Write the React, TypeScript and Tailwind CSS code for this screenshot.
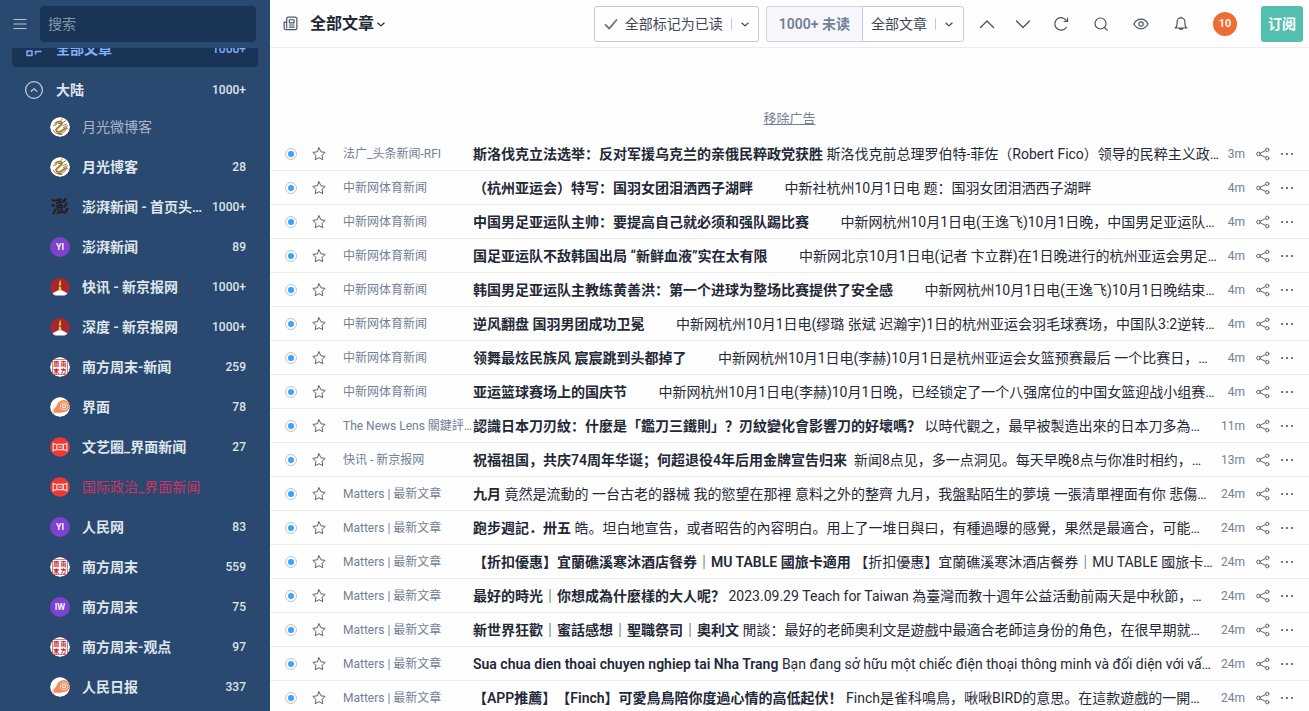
import React from 'react';
import clsx from 'clsx';

type Feed = {
  name: string;
  count?: string;
  icon: 'dragon' | 'paper' | 'yi' | 'iw' | 'beijing' | 'nanfang' | 'comet' | 'jiemian';
  state?: 'read' | 'error';
};

type Article = {
  source: string;
  title: string;
  excerpt: string;
  time: string;
};

const feeds: Feed[] = [
  { name: '月光微博客', icon: 'dragon', state: 'read' },
  { name: '月光博客', count: '28', icon: 'dragon' },
  { name: '澎湃新闻 - 首页头…', count: '1000+', icon: 'paper' },
  { name: '澎湃新闻', count: '89', icon: 'yi' },
  { name: '快讯 - 新京报网', count: '1000+', icon: 'beijing' },
  { name: '深度 - 新京报网', count: '1000+', icon: 'beijing' },
  { name: '南方周末-新闻', count: '259', icon: 'nanfang' },
  { name: '界面', count: '78', icon: 'comet' },
  { name: '文艺圈_界面新闻', count: '27', icon: 'jiemian' },
  { name: '国际政治_界面新闻', icon: 'jiemian', state: 'error' },
  { name: '人民网', count: '83', icon: 'yi' },
  { name: '南方周末', count: '559', icon: 'nanfang' },
  { name: '南方周末', count: '75', icon: 'iw' },
  { name: '南方周末-观点', count: '97', icon: 'nanfang' },
  { name: '人民日报', count: '337', icon: 'comet' },
];

const articles: Article[] = [
  {
    source: '法广_头条新闻-RFI',
    title: '斯洛伐克立法选举：反对军援乌克兰的亲俄民粹政党获胜',
    excerpt: '斯洛伐克前总理罗伯特-菲佐（Robert Fico）领导的民粹主义政…',
    time: '3m',
  },
  {
    source: '中新网体育新闻',
    title: '（杭州亚运会）特写：国羽女团泪洒西子湖畔',
    excerpt: '\u3000\u3000中新社杭州10月1日电 题：国羽女团泪洒西子湖畔',
    time: '4m',
  },
  {
    source: '中新网体育新闻',
    title: '中国男足亚运队主帅：要提高自己就必须和强队踢比赛',
    excerpt: '\u3000\u3000中新网杭州10月1日电(王逸飞)10月1日晚，中国男足亚运队…',
    time: '4m',
  },
  {
    source: '中新网体育新闻',
    title: '国足亚运队不敌韩国出局 “新鲜血液”实在太有限',
    excerpt: '\u3000\u3000中新网北京10月1日电(记者 卞立群)在1日晚进行的杭州亚运会男足…',
    time: '4m',
  },
  {
    source: '中新网体育新闻',
    title: '韩国男足亚运队主教练黄善洪：第一个进球为整场比赛提供了安全感',
    excerpt: '\u3000\u3000中新网杭州10月1日电(王逸飞)10月1日晚结束…',
    time: '4m',
  },
  {
    source: '中新网体育新闻',
    title: '逆风翻盘 国羽男团成功卫冕',
    excerpt: '\u3000\u3000中新网杭州10月1日电(缪璐 张斌 迟瀚宇)1日的杭州亚运会羽毛球赛场，中国队3:2逆转…',
    time: '4m',
  },
  {
    source: '中新网体育新闻',
    title: '领舞最炫民族风 宸宸跳到头都掉了',
    excerpt: '\u3000\u3000中新网杭州10月1日电(李赫)10月1日是杭州亚运会女篮预赛最后 一个比赛日，…',
    time: '4m',
  },
  {
    source: '中新网体育新闻',
    title: '亚运篮球赛场上的国庆节',
    excerpt: '\u3000\u3000中新网杭州10月1日电(李赫)10月1日晚，已经锁定了一个八强席位的中国女篮迎战小组赛…',
    time: '4m',
  },
  {
    source: 'The News Lens 關鍵評…',
    title: '認識日本刀刃紋：什麼是「鑑刀三鐵則」？刃紋變化會影響刀的好壞嗎？',
    excerpt: '以時代觀之，最早被製造出來的日本刀多為…',
    time: '11m',
  },
  {
    source: '快讯 - 新京报网',
    title: '祝福祖国，共庆74周年华诞；何超退役4年后用金牌宣告归来',
    excerpt: '\u00a0新闻8点见，多一点洞见。每天早晚8点与你准时相约，…',
    time: '13m',
  },
  {
    source: 'Matters | 最新文章',
    title: '九月',
    excerpt: '竟然是流動的 一台古老的器械 我的慾望在那裡 意料之外的整齊 九月，我盤點陌生的夢境 一張清單裡面有你 悲傷…',
    time: '24m',
  },
  {
    source: 'Matters | 最新文章',
    title: '跑步週記．卅五',
    excerpt: '皓。坦白地宣告，或者昭告的內容明白。用上了一堆日與曰，有種過曝的感覺，果然是最適合，可能…',
    time: '24m',
  },
  {
    source: 'Matters | 最新文章',
    title: '【折扣優惠】宜蘭礁溪寒沐酒店餐券｜MU TABLE 國旅卡適用',
    excerpt: '【折扣優惠】宜蘭礁溪寒沐酒店餐券｜MU TABLE 國旅卡…',
    time: '24m',
  },
  {
    source: 'Matters | 最新文章',
    title: '最好的時光｜你想成為什麼樣的大人呢？',
    excerpt: '2023.09.29 Teach for Taiwan 為臺灣而教十週年公益活動前兩天是中秋節，…',
    time: '24m',
  },
  {
    source: 'Matters | 最新文章',
    title: '新世界狂歡｜蜜話感想｜聖職祭司｜奧利文',
    excerpt: '閒談：最好的老師奧利文是遊戲中最適合老師這身份的角色，在很早期就…',
    time: '24m',
  },
  {
    source: 'Matters | 最新文章',
    title: 'Sua chua dien thoai chuyen nghiep tai Nha Trang',
    excerpt: 'Bạn đang sở hữu một chiếc điện thoại thông minh và đối diện với vấ…',
    time: '24m',
  },
  {
    source: 'Matters | 最新文章',
    title: '【APP推薦】【Finch】可愛鳥鳥陪你度過心情的高低起伏！',
    excerpt: 'Finch是雀科鳴鳥，啾啾BIRD的意思。在這款遊戲的一開…',
    time: '24m',
  },
];

const Icon = ({
  size = 16,
  width = 1.2,
  className,
  children,
}: {
  size?: number;
  width?: number;
  className?: string;
  children: React.ReactNode;
}) => (
  <svg
    width={size}
    height={size}
    viewBox="0 0 16 16"
    fill="none"
    stroke="currentColor"
    strokeWidth={width}
    strokeLinecap="round"
    strokeLinejoin="round"
    className={clsx('shrink-0', className)}
    aria-hidden="true"
  >
    {children}
  </svg>
);

const SmallChevron = ({ className }: { className?: string }) => (
  <Icon size={10} width={2} className={className}>
    <path d="M3 6.5l5 4.5 5-4.5" />
  </Icon>
);

const FeedIcon = ({ icon }: { icon: Feed['icon'] }) => {
  if (icon === 'yi' || icon === 'iw') {
    return (
      <span className="w-5 h-5 shrink-0 rounded-full bg-[#7e42cf] text-white text-[9px] leading-none font-semibold flex items-center justify-center">
        {icon.toUpperCase()}
      </span>
    );
  }
  if (icon === 'paper') {
    return (
      <span className="w-5 h-5 shrink-0 text-[#241c1f] text-lg leading-5 font-bold text-center -rotate-6">澎</span>
    );
  }
  return (
    <svg width="20" height="20" viewBox="0 0 20 20" className="shrink-0 rounded-full" aria-hidden="true">
      {icon === 'dragon' && (
        <>
          <circle cx="10" cy="10" r="10" fill="#fff" />
          <g fill="none" stroke="#a87b2c" strokeLinecap="round">
            <path d="M5.6 6.2c1.2-1.8 5.200-2.200 6.200-.6 1.400 2.600-4.800 4.600-5.600 7-.5 1.800 1.600 2.800 4 2 2.600-.8 3.600-3.600 6.600-3.400" strokeWidth="1.900" />
            <path d="M3.500 13.500c1 2.400 3.200 3.400 6.300 3.100M10 16.600c2.400-.2 4.400-1.600 5.400-3.300M10.500 4l2-2.200M12.500 5.800l3.200-2M13 8.400l3.600-1.200M13.500 10.500l4-1.800M3.500 8.600l3-1" strokeWidth="1" />
            <path d="M8 17l4 .2M8.500 6.300l2 .4" stroke="#6e4a18" strokeWidth=".9" />
          </g>
        </>
      )}
      {icon === 'beijing' && (
        <>
          <path d="M3 17.8A10 10 0 1 1 17 17.8z" fill="#a8262e" />
          <path d="M2 17.5c1.2-2.300 4-3 6-4.300h4c2 1.300 4.800 2 6 4.300l-1.500 1h-13z" fill="#fff" />
          <path d="M8.600 13.200l.4-5.400c0-1.800 1.200-2.800.7-5.300 1.400 1.500 1.500 3.300 1.200 5.300l.5 5.400z" fill="#eecb3c" />
          <path d="M9.200 8.500h1.800v1.600H9.200z" fill="#8c5a2a" />
        </>
      )}
      {icon === 'nanfang' && (
        <>
          <circle cx="10" cy="10" r="10" fill="#fff" />
          <path d="M2.500 2.500h15v15h-15z" fill="none" stroke="#d8545c" strokeWidth=".8" />
          <g fill="#c9202b" fontSize="6" fontWeight="700" textAnchor="middle">
            <text x="6.2" y="8.600">周</text>
            <text x="13.600" y="8.600">南</text>
            <text x="6.200" y="15.800">末</text>
            <text x="13.600" y="15.800">方</text>
          </g>
        </>
      )}
      {icon === 'comet' && (
        <>
          <circle cx="10" cy="10" r="10" fill="#fff" />
          <path
            d="M13.800 3a6 6 0 0 1 .4 12c-2.400.2-4 1.200-7 .8-1.600-.2-2.600.6-4.400.8.6-.8 1.500-1.200 1.900-1.900-1 .1-2.500.3-3.500-.2 1.600-.3 2.800-1 3.400-1.700-1 .2-2.200.2-3.200-.2 3-.2 4.400-2.200 5.400-4.600C8 5.400 10.500 3 13.800 3z"
            fill="#f18e60"
          />
          <circle cx="14" cy="9.200" r="3.700" fill="none" stroke="#fbd8c6" strokeWidth=".9" />
          <circle cx="14" cy="9.200" r="1.700" fill="none" stroke="#fff" strokeWidth="1" />
        </>
      )}
      {icon === 'jiemian' && (
        <>
          <circle cx="10" cy="10" r="10" fill="#ee3834" />
          <g fill="none" stroke="#fbd9d0" strokeWidth="1.200">
            <path d="M6.800 7.800L3.200 6.400v7.400l3.600-1.500zM13.200 7.800l3.600-1.400v7.400l-3.600-1.500z" />
            <path d="M6.800 7.300h6.400v5.400H6.800M8.500 10h3" />
          </g>
        </>
      )}
    </svg>
  );
};

const FeedItem = ({ feed }: { feed: Feed }) => (
  <a href="#" className="flex items-center h-9 pl-[38px] pr-3">
    <FeedIcon icon={feed.icon} />
    <span
      className={clsx(
        'ml-3 mr-1 flex-1 min-w-0 truncate text-sm',
        !feed.state && 'font-semibold text-[#dfe5ec]',
        feed.state === 'read' && 'text-[#a9b7c7]',
        feed.state === 'error' && 'text-[#cb3463]'
      )}
    >
      {feed.name}
    </span>
    {feed.count && <span className="text-xs font-medium text-[#dfe5ec]">{feed.count}</span>}
  </a>
);

const Sidebar = () => (
  <aside className="w-[270px] shrink-0 bg-[#2a4970] flex flex-col overflow-hidden">
    <div className="h-12 shrink-0 flex items-center gap-3 pl-3 pr-[14px]">
      <button type="button" aria-label="菜单" className="text-[#b6c2d0] w-4">
        <Icon>
          <path d="M2 3.500h12M2 8h12M2 12.500h12" />
        </Icon>
      </button>
      <input
        type="search"
        aria-label="搜索"
        placeholder="搜索"
        className="flex-1 min-w-0 h-9 rounded bg-[#1a3458] px-2 text-sm text-white placeholder:text-[#8694a8] outline-none"
      />
    </div>
    <nav className="flex-1 min-h-0 overflow-hidden px-3">
      <div className="-mt-[17px]">
        <a href="#" className="flex items-center h-9 pl-[14px] pr-3 rounded bg-[#1a3458] text-[#7fb0f5]">
          <Icon width={1.5} className="mr-[14px]">
            <path d="M1 1.500h5v4H1zM1 10h5v4.500H1zM9 3.500h6M9.500 13v-2.500H15" />
          </Icon>
          <span className="flex-1 text-sm font-semibold">全部文章</span>
          <span className="text-xs font-medium">1000+</span>
        </a>
        <a href="#" className="flex items-center h-[42px] pt-1 px-3 text-[#dfe5ec]">
          <Icon size={20} width={1} className="mr-3 text-[#c3cdd9]">
            <circle cx="8" cy="8" r="6.700" />
            <path d="M5.800 9L8 6.900 10.200 9" />
          </Icon>
          <span className="flex-1 text-sm font-semibold">大陆</span>
          <span className="text-xs font-medium">1000+</span>
        </a>
        <div className="flex flex-col gap-1">
          {feeds.map((feed, i) => (
            <FeedItem key={i} feed={feed} />
          ))}
        </div>
      </div>
    </nav>
  </aside>
);

const Toolbar = () => (
  <header className="h-12 shrink-0 flex items-center border-b border-[#ececee] pl-[13px] pr-[6px]">
    <button type="button" className="flex items-center text-[#1f2937]">
      <Icon size={15} width={1.3} className="text-[#4a5568]">
        <path d="M5.500 1.200h7.700a1.600 1.600 0 0 1 1.600 1.600v10.200a1.600 1.600 0 0 1-1.600 1.600H3a1.800 1.800 0 0 1-1.800-1.800V6.500h2.700V2.800a1.600 1.600 0 0 1 1.600-1.600zM3.900 6.500v6.200" />
        <path d="M6.800 4h5v3.300h-5zM6.800 9.600h5M6.800 11.900h5" />
      </Icon>
      <span className="ml-3 text-base font-semibold">全部文章</span>
      <SmallChevron className="ml-[2px]" />
    </button>

    <div className="ml-auto flex items-center text-sm text-[#3f4756]">
      <div className="flex h-9 rounded-[3px] border border-[#bccbdf]">
        <button type="button" className="flex items-center px-2">
          <Icon width={1.8} className="text-[#64748b]">
            <path d="M2.500 8.800l3.700 3.800L13.500 4" />
          </Icon>
          <span className="ml-[6px]">全部标记为已读</span>
        </button>
        <button type="button" aria-label="标记选项" className="flex items-center">
          <span className="w-px h-3 bg-[#bccbdf] mr-2" />
          <SmallChevron className="mr-2" />
        </button>
      </div>
      <button
        type="button"
        className="ml-[7px] h-9 px-3 rounded-l-[3px] border border-r-0 border-[#ccd8e7] bg-[#f7f7fb] font-semibold text-[#718096]"
      >
        1000+ 未读
      </button>
      <div className="flex h-9 rounded-r-[3px] border border-[#bccbdf]">
        <button type="button" className="px-2">
          全部文章
        </button>
        <button type="button" aria-label="筛选选项" className="flex items-center">
          <span className="w-px h-3 bg-[#bccbdf] mr-2" />
          <SmallChevron className="mr-[9px]" />
        </button>
      </div>
    </div>

    <div className="flex items-center gap-6 ml-[15px] text-[#4a5160]">
      <div className="flex items-center gap-5">
        <button type="button" aria-label="上一篇">
          <Icon width={1.3}>
            <path d="M1.500 11.500L8 5l6.500 6.500" />
          </Icon>
        </button>
        <button type="button" aria-label="下一篇">
          <Icon width={1.3}>
            <path d="M1.500 5L8 11.500 14.500 5" />
          </Icon>
        </button>
      </div>
      <button type="button" aria-label="刷新" className="-ml-[2px]">
        <Icon width={1.2}>
          <path d="M13.300 11.200A6.200 6.200 0 1 1 13.500 5M14.500 2.200v3.300h-3.400" />
        </Icon>
      </button>
      <button type="button" aria-label="查找">
        <Icon width={1.2}>
          <circle cx="7.500" cy="7.500" r="5.500" />
          <path d="M11.500 11.500l2.800 2.800" />
        </Icon>
      </button>
      <button type="button" aria-label="视图">
        <Icon width={1.2}>
          <path d="M.9 8C2.700 4.800 5 3.200 8 3.200S13.300 4.800 15.100 8C13.300 11.200 11 12.800 8 12.800S2.700 11.200.9 8z" />
          <circle cx="8" cy="8" r="2.200" />
        </Icon>
      </button>
      <button type="button" aria-label="通知">
        <Icon width={1.2}>
          <path d="M2.200 12c1.400-1.100 1.900-2.200 1.900-4V5.800a3.900 3.900 0 0 1 7.800 0V8c0 1.800.5 2.900 1.900 4zM6.300 12.200a1.800 1.800 0 0 0 3.400 0M8 1v.8" />
        </Icon>
      </button>
      <button
        type="button"
        className="flex items-center justify-center w-6 h-6 rounded-full bg-[#ee6c36] text-white text-[11px] leading-none font-semibold"
      >
        10
      </button>
      <button type="button" className="h-9 w-[42px] rounded-[3px] bg-[#55bfae] text-white text-sm font-semibold">
        订阅
      </button>
    </div>
  </header>
);

const ArticleRow = ({ article }: { article: Article }) => (
  <li className="flex items-center h-[34px] border-b border-[#ececee] pl-[15px] pr-[14px]">
    <button
      type="button"
      aria-label="标记为已读"
      className="w-3 h-3 shrink-0 rounded-full border border-[#b9c6dc] flex items-center justify-center"
    >
      <span className="w-[6px] h-[6px] rounded-full bg-[#3ba3f8]" />
    </button>
    <button type="button" aria-label="加星标" className="ml-[14px] shrink-0 text-[#5b6270]">
      <Icon width={1}>
        <path d="M8 1.800l1.900 4 4.300.6-3.200 3 .8 4.400L8 11.700l-3.800 2.100.8-4.400-3.200-3 4.300-.6z" />
      </Icon>
    </button>
    <span className="ml-4 w-[130px] shrink-0 truncate text-xs text-[#718096]">{article.source}</span>
    <a href="#" className="flex-1 min-w-0 truncate text-sm text-[#1f2937] [text-spacing-trim:space-all]">
      <span className="font-semibold">{article.title}</span> {article.excerpt}
    </a>
    <span className="ml-2 shrink-0 text-xs text-[#718096]">{article.time}</span>
    <button type="button" aria-label="分享" className="ml-[10px] shrink-0 text-[#5b6472]">
      <Icon width={1}>
        <circle cx="3.500" cy="8" r="1.800" />
        <circle cx="12.200" cy="3.800" r="1.700" />
        <circle cx="12.200" cy="12.200" r="1.700" />
        <path d="M5.200 7.200l5.400-2.600M5.200 8.800l5.400 2.600" />
      </Icon>
    </button>
    <button type="button" aria-label="更多" className="ml-2 shrink-0 text-[#4a5568]">
      <Icon>
        <g fill="currentColor" stroke="none">
          <circle cx="3" cy="8" r="1.100" />
          <circle cx="8" cy="8" r="1.100" />
          <circle cx="13" cy="8" r="1.100" />
        </g>
      </Icon>
    </button>
  </li>
);

const App = () => {
  return (
    <div className="flex h-screen overflow-hidden bg-[#fefefe] font-[Roboto,'Noto_Sans_CJK_SC',sans-serif]">
      <Sidebar />
      <main className="flex-1 min-w-0 flex flex-col">
        <Toolbar />
        <div className="flex-1 min-h-0 overflow-hidden">
          <div className="h-[89px] flex items-end justify-center pb-2">
            <a href="#" className="text-[13px] leading-5 text-[#718096] underline">
              移除广告
            </a>
          </div>
          <ul>
            {articles.map((article, i) => (
              <ArticleRow key={i} article={article} />
            ))}
          </ul>
        </div>
      </main>
    </div>
  );
};

export default App;
